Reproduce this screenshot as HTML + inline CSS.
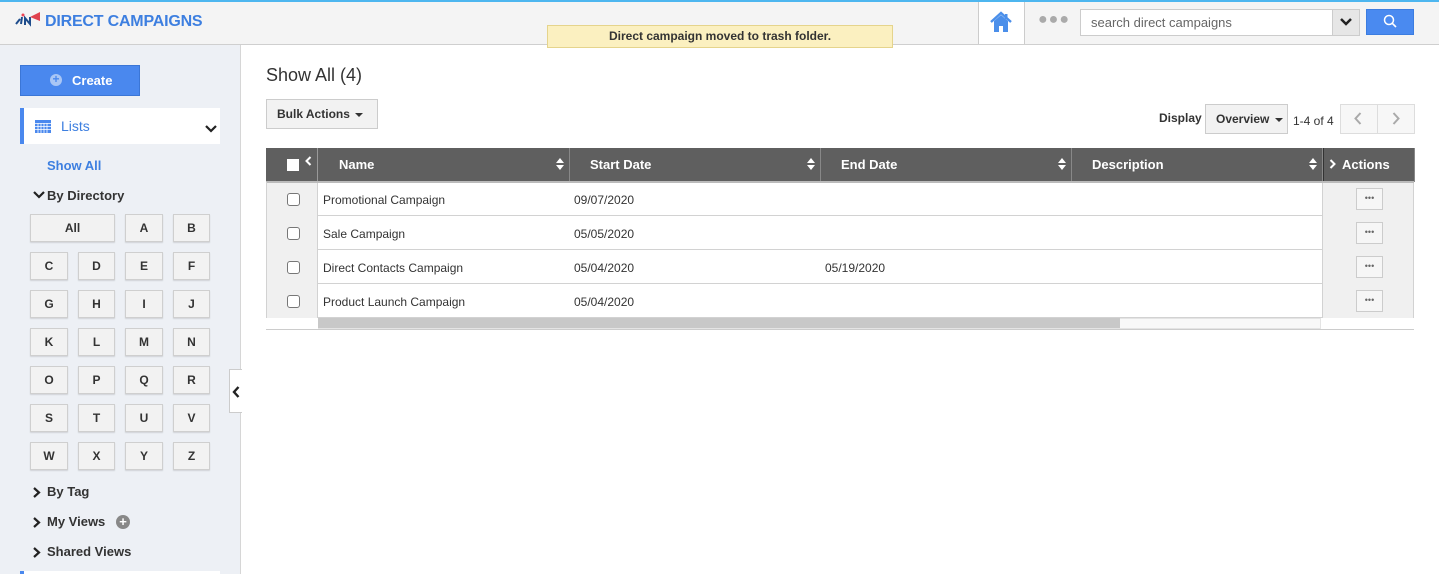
<!DOCTYPE html>
<html><head><meta charset="utf-8"><style>
*{box-sizing:border-box;margin:0;padding:0}
body{width:1439px;height:574px;overflow:hidden;font-family:"Liberation Sans",Arial,sans-serif;background:#fff;position:relative;color:#333}
.a{position:absolute}
.hdr{left:0;top:0;width:1439px;height:45px;background:#f4f4f4;border-top:2px solid #4db6ef;border-bottom:1px solid #cfcfcf}
.side{left:0;top:45px;width:241px;height:529px;background:#edf0f5;border-right:1px solid #d6d6d6}
.lb{position:absolute;height:28px;background:#f2f2f2;border:1px solid #cfcfcf;box-shadow:0 1px 1px rgba(0,0,0,.12);font-size:12px;font-weight:bold;text-align:center;line-height:26px;color:#333}
.nav{position:absolute;font-size:13px;font-weight:bold;color:#333}
.th{position:absolute;top:148px;height:34px;background:#5f5f5f;color:#fff;font-size:13px;font-weight:bold;line-height:33px;border-right:1px solid #888}
.sort{position:absolute;right:9px;top:10px;width:0;height:0}
.sort:before{content:"";position:absolute;left:-4px;top:0;border:4px solid transparent;border-bottom:5px solid #fff;border-top:0}
.sort:after{content:"";position:absolute;left:-4px;top:7px;border:4px solid transparent;border-top:5px solid #fff;border-bottom:0}
.row{position:absolute;left:266px;width:1148px;height:34px;border-bottom:1px solid #d2d2d2;font-size:12px}
.row span{position:absolute;top:11px}
.cbc{position:absolute;left:0;top:0;width:52px;height:34px;background:#f0f0f0;border-right:1px solid #d2d2d2}
.cb{position:absolute;left:21px;top:11px;width:13px;height:13px;border:1px solid #777;border-radius:3px;background:#fff}
.act{position:absolute;left:1056px;top:0;width:92px;height:34px;background:#f0f0f0;border-left:1px solid #d2d2d2;border-right:1px solid #d2d2d2}
.dots{position:absolute;left:33px;top:6px;width:27px;height:22px;border:1px solid #ccc;background:#f6f6f6;font-size:9px;text-align:center;line-height:18px;color:#666;letter-spacing:0}
</style></head><body>
<div class="a hdr"></div>
<svg class="a" style="left:15px;top:11px" width="26" height="16" viewBox="0 0 26 16"><path d="M1 13 L5 8 M6 13 L7 6 M10 14 L10 7 L15 13 L15 6" stroke="#1e4d8c" stroke-width="2" fill="none"/><circle cx="8" cy="4" r="1.5" fill="#e45"/><path d="M15 6 L25 1 L25 10 Z" fill="#e0434f"/></svg>
<div class="a" style="left:45px;top:13px;font-size:16px;font-weight:bold;color:#3d7fe0;letter-spacing:-0.2px">DIRECT CAMPAIGNS</div>
<div class="a" style="left:547px;top:25px;width:346px;height:23px;background:#fbf0c0;border:1px solid #e5d48c;font-size:12px;font-weight:bold;text-align:center;line-height:21px;color:#333">Direct campaign moved to trash folder.</div>
<div class="a" style="left:978px;top:2px;width:47px;height:42px;background:#fff;border-left:1px solid #ccc;border-right:1px solid #ccc"></div>
<svg class="a" style="left:990px;top:11px" width="22" height="22" viewBox="0 0 22 22"><path d="M1 11 L11 2 L21 11" stroke="#4b8fea" stroke-width="2.4" fill="none"/><path d="M4 10 L11 4 L18 10 L18 21 L13 21 L13 15 L9 15 L9 21 L4 21Z" fill="#4b8fea"/><rect x="15" y="3" width="2.5" height="5" fill="#4b8fea"/></svg>
<div class="a" style="left:1038px;top:11px;font-size:16px;color:#aaa;letter-spacing:1px">●●●</div>
<div class="a" style="left:1080px;top:9px;width:280px;height:27px;background:#fff;border:1px solid #ccc"></div>
<div class="a" style="left:1091px;top:15px;font-size:13px;color:#666">search direct campaigns</div>
<div class="a" style="left:1332px;top:9px;width:28px;height:27px;background:#e6e6e6;border:1px solid #ccc"></div>
<svg class="a" style="left:1340px;top:18px" width="12" height="9" viewBox="0 0 12 9"><path d="M1 1 L6 6 L11 1" stroke="#222" stroke-width="2.5" fill="none"/></svg>
<div class="a" style="left:1366px;top:9px;width:48px;height:26px;background:#4a8af0;border:1px solid #3c7de0"></div>
<svg class="a" style="left:1383px;top:14px" width="14" height="14" viewBox="0 0 14 14"><circle cx="6" cy="6" r="4.5" stroke="#fff" stroke-width="1.5" fill="none"/><path d="M9.3 9.3 L13 13" stroke="#fff" stroke-width="1.6"/></svg>

<div class="a side"></div>
<div class="a" style="left:20px;top:65px;width:120px;height:31px;background:#4a88ee;border:1px solid #3b76d6;color:#fff;font-size:13px;font-weight:bold;line-height:29px;padding-left:51px">Create</div>
<div class="a" style="left:50px;top:74px;width:12px;height:12px;border-radius:50%;background:#a9c6f5;color:#4a88ee;font-size:12px;line-height:11px;text-align:center;font-weight:bold">+</div>
<div class="a" style="left:20px;top:108px;width:200px;height:36px;background:#fff;border-left:4px solid #4a88ee"></div>
<svg class="a" style="left:35px;top:120px" width="16" height="13" viewBox="0 0 16 13"><rect width="16" height="13" fill="#4a88ee"/><path d="M0 3.5H16M0 6.5H16M0 9.5H16M3 3V13M6 3V13M9 3V13M12 3V13" stroke="#fff" stroke-width=".8"/></svg>
<div class="a" style="left:61px;top:118px;font-size:14px;color:#3d7fe0">Lists</div>
<svg class="a" style="left:205px;top:125px" width="12" height="8" viewBox="0 0 12 8"><path d="M1 1 L6 6 L11 1" stroke="#222" stroke-width="2.2" fill="none"/></svg>
<div class="nav" style="left:47px;top:158px;color:#3d7fe0">Show All</div>
<svg class="a" style="left:33px;top:191px" width="12" height="8" viewBox="0 0 12 8"><path d="M1 1 L6 6 L11 1" stroke="#222" stroke-width="2.2" fill="none"/></svg>
<div class="nav" style="left:47px;top:188px">By Directory</div>
<div class="lb" style="left:30px;top:214px;width:85px">All</div>
<div class="lb" style="left:125px;top:214px;width:38px">A</div>
<div class="lb" style="left:173px;top:214px;width:37px">B</div>
<div id="g"></div>
<script>
var L="CDEFGHIJKLMNOPQRSTUVWXYZ",xs=[30,78,125,173],ws=[38,37,38,37],h="";
for(var i=0;i<24;i++){var r=Math.floor(i/4),c=i%4;h+='<div class="lb" style="left:'+xs[c]+'px;top:'+(252+r*38)+'px;width:'+ws[c]+'px">'+L[i]+'</div>';}
document.getElementById("g").outerHTML=h;
</script>
<svg class="a" style="left:33px;top:487px" width="8" height="11" viewBox="0 0 8 11"><path d="M1 1 L6 5.5 L1 10" stroke="#222" stroke-width="2.2" fill="none"/></svg>
<div class="nav" style="left:47px;top:484px">By Tag</div>
<svg class="a" style="left:33px;top:517px" width="8" height="11" viewBox="0 0 8 11"><path d="M1 1 L6 5.5 L1 10" stroke="#222" stroke-width="2.2" fill="none"/></svg>
<div class="nav" style="left:47px;top:514px">My Views</div>
<div class="a" style="left:116px;top:515px;width:14px;height:14px;border-radius:50%;background:#888;color:#fff;font-size:13px;line-height:13px;text-align:center;font-weight:bold">+</div>
<svg class="a" style="left:33px;top:547px" width="8" height="11" viewBox="0 0 8 11"><path d="M1 1 L6 5.5 L1 10" stroke="#222" stroke-width="2.2" fill="none"/></svg>
<div class="nav" style="left:47px;top:544px">Shared Views</div>
<div class="a" style="left:20px;top:571px;width:200px;height:3px;background:#fff;border-left:4px solid #4a88ee"></div>
<div class="a" style="left:229px;top:369px;width:13px;height:44px;background:#fff;border:1px solid #ccc;border-right:none"></div>
<svg class="a" style="left:232px;top:386px" width="8" height="12" viewBox="0 0 8 12"><path d="M6.5 1 L2 6 L6.5 11" stroke="#222" stroke-width="2.4" fill="none"/></svg>

<div class="a" style="left:266px;top:65px;font-size:18px;color:#333">Show All (4)</div>
<div class="a" style="left:266px;top:99px;width:112px;height:30px;background:#f2f2f2;border:1px solid #ccc;font-size:12px;font-weight:bold;line-height:28px;padding-left:10px">Bulk Actions</div>
<div class="a" style="left:355px;top:113px;border:4px solid transparent;border-top:4px solid #333;border-bottom:0"></div>
<div class="a" style="left:1159px;top:111px;font-size:12px;font-weight:bold">Display</div>
<div class="a" style="left:1205px;top:104px;width:83px;height:30px;background:#f2f2f2;border:1px solid #ccc;font-size:12px;font-weight:bold;line-height:28px;padding-left:10px">Overview</div>
<div class="a" style="left:1275px;top:118px;border:4px solid transparent;border-top:4px solid #333;border-bottom:0"></div>
<div class="a" style="left:1293px;top:114px;font-size:12px">1-4 of 4</div>
<div class="a" style="left:1340px;top:104px;width:75px;height:30px;border:1px solid #ddd;background:#f7f7f7"></div>
<div class="a" style="left:1377px;top:104px;width:1px;height:30px;background:#ddd"></div>
<svg class="a" style="left:1354px;top:112px" width="8" height="13" viewBox="0 0 8 13"><path d="M6.5 1 L1.5 6.5 L6.5 12" stroke="#aaa" stroke-width="2" fill="none"/></svg>
<svg class="a" style="left:1392px;top:112px" width="8" height="13" viewBox="0 0 8 13"><path d="M1.5 1 L6.5 6.5 L1.5 12" stroke="#aaa" stroke-width="2" fill="none"/></svg>

<div class="th" style="left:266px;width:52px;border-right:1px solid #999"></div>
<div class="a" style="left:287px;top:159px;width:12px;height:12px;background:#fff"></div>
<svg class="a" style="left:305px;top:156px" width="7" height="10" viewBox="0 0 7 10"><path d="M5.5 1 L1.5 5 L5.5 9" stroke="#fff" stroke-width="2" fill="none"/></svg>
<div class="th" style="left:318px;width:252px;padding-left:21px">Name<i class="sort"></i></div>
<div class="th" style="left:570px;width:251px;padding-left:20px">Start Date<i class="sort"></i></div>
<div class="th" style="left:821px;width:251px;padding-left:20px">End Date<i class="sort"></i></div>
<div class="th" style="left:1072px;width:251px;padding-left:20px">Description<i class="sort"></i></div>
<div class="th" style="left:1323px;width:92px;padding-left:18px;border-left:1px solid #333">Actions</div>
<svg class="a" style="left:1329px;top:159px" width="7" height="10" viewBox="0 0 7 10"><path d="M1.5 1 L5.5 5 L1.5 9" stroke="#fff" stroke-width="2" fill="none"/></svg>

<div class="row" style="top:182px"><div class="cbc"><div class="cb"></div></div><span style="left:57px">Promotional Campaign</span><span style="left:308px">09/07/2020</span><div class="act"><div class="dots">•••</div></div></div>
<div class="row" style="top:216px"><div class="cbc"><div class="cb"></div></div><span style="left:57px">Sale Campaign</span><span style="left:308px">05/05/2020</span><div class="act"><div class="dots">•••</div></div></div>
<div class="row" style="top:250px"><div class="cbc"><div class="cb"></div></div><span style="left:57px">Direct Contacts Campaign</span><span style="left:308px">05/04/2020</span><span style="left:559px">05/19/2020</span><div class="act"><div class="dots">•••</div></div></div>
<div class="row" style="top:284px"><div class="cbc"><div class="cb"></div></div><span style="left:57px">Product Launch Campaign</span><span style="left:308px">05/04/2020</span><div class="act"><div class="dots">•••</div></div></div>
<div class="a" style="left:266px;top:181px;width:1148px;height:2px;background:#bbb"></div>
<div class="a" style="left:266px;top:182px;width:1px;height:136px;background:#d2d2d2"></div>
<div class="a" style="left:318px;top:318px;width:1003px;height:11px;background:#f8f8f8;border:1px solid #e4e4e4"></div>
<div class="a" style="left:318px;top:318px;width:802px;height:10px;background:#c8c8c8"></div>
<div class="a" style="left:266px;top:329px;width:1148px;height:1px;background:#ccc"></div>
</body></html>
